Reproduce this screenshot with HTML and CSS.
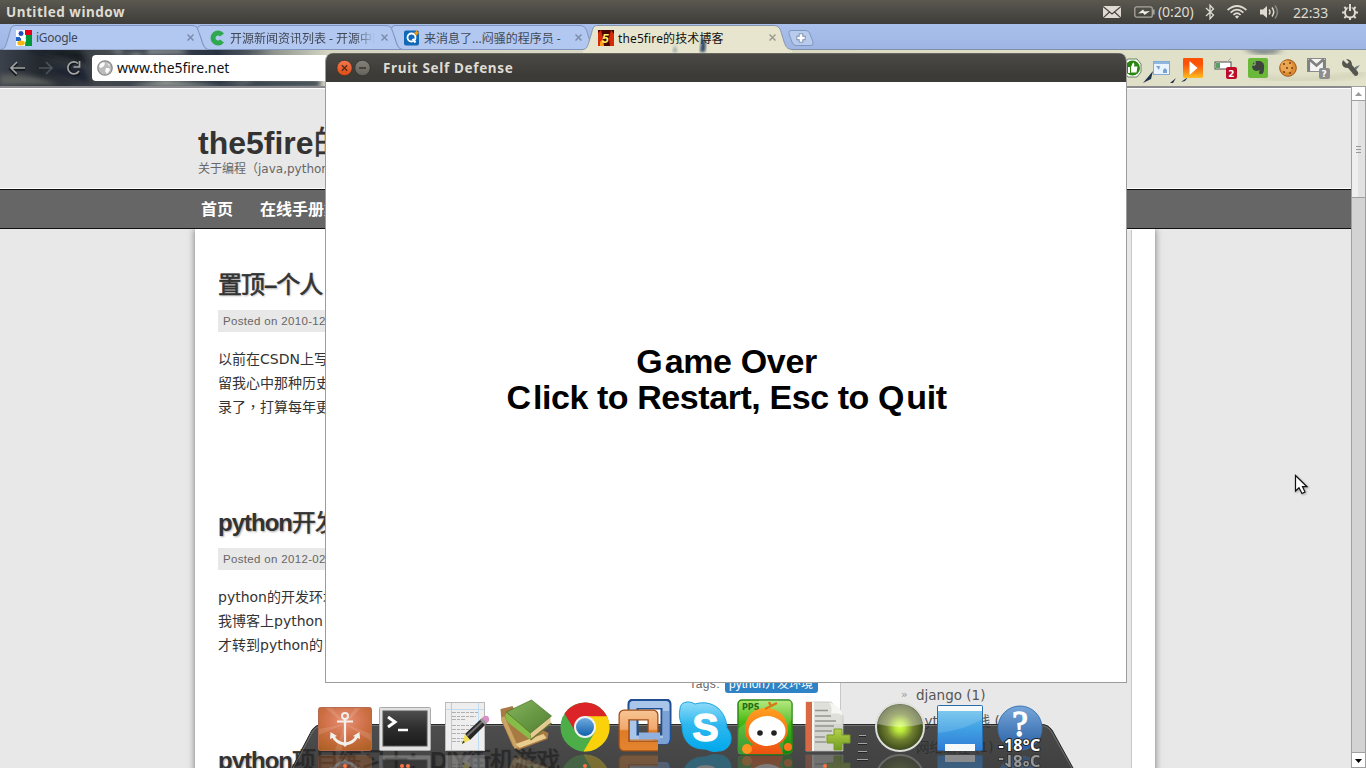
FILE: index.html
```html
<!DOCTYPE html>
<html lang="zh-CN">
<head>
<meta charset="utf-8">
<title>Desktop</title>
<link rel="stylesheet" href="styles.css">
</head>
<body>
<div class="desktop">
  <header class="panel">
    <span class="panel-title">Untitled window</span>
    <div class="indicators">
      <svg class="ind-mail" width="18" height="12" viewBox="0 0 18 12"><rect width="18" height="12" fill="#dfdbd2"/><path d="M0 0.5 L9 8 L18 0.5 M0 12 L6.5 6 M18 12 L11.500 6" fill="none" stroke="#45443f" stroke-width="1.200"/></svg>
      <svg class="ind-bat" width="21" height="12" viewBox="0 0 21 12"><rect x=".8" y=".8" width="17.500" height="10.400" rx="2" fill="none" stroke="#aaa79f" stroke-width="1.300"/><rect x="19" y="3.500" width="1.600" height="5" fill="#aaa79f"/><path d="M4 7.500 L9 3.500 L10.500 5.500 L16 5 L10.500 9 L9 7Z" fill="#f0ece3"/></svg>
      <span class="ind-time">(0:20)</span>
      <svg class="ind-bt" width="10" height="16" viewBox="0 0 10 16"><path d="M1 4 L8.500 11 L5 14.800 V1.200 L8.500 5 L1 12" fill="none" stroke="#dfdbd2" stroke-width="1.300"/></svg>
      <svg class="ind-wifi" width="20" height="14" viewBox="0 0 20 14"><g fill="none" stroke="#dfdbd2" stroke-width="1.700"><path d="M.6 5 Q10-3 19.400 5"/><path d="M3.600 7.600 Q10 1.500 16.400 7.600"/><path d="M6.400 10 Q10 6.200 13.600 10"/></g><path d="M8 11.500 Q10 9.500 12 11.500 L10 13.800Z" fill="#dfdbd2"/></svg>
      <svg class="ind-vol" width="20" height="14" viewBox="0 0 20 14"><path d="M0 4.500 H3 L7 1 V13 L3 9.500 H0Z" fill="#dfdbd2"/><g fill="none" stroke-width="1.500"><path d="M9 4.500 Q11 7 9 9.500 M12 2.500 Q15.500 7 12 11.500" stroke="#dfdbd2"/><path d="M15 .5 Q20 7 15 13.500" stroke="#89877f"/></g></svg>
      <span class="ind-clock">22:33</span>
      <svg class="ind-gear" width="16" height="16" viewBox="0 0 16 16"><circle cx="8" cy="8.500" r="5" fill="none" stroke="#dfdbd2" stroke-width="2"/><path d="M8 0 V7 M0 8.500 H3 M13 8.500 H16 M2.300 3 L4.500 5 M13.700 3 L11.500 5 M2.300 14 L4.500 12 M13.700 14 L11.500 12 M8 13 V16" stroke="#dfdbd2" stroke-width="2"/><path d="M6.200 0 V6 M9.800 0 V6" stroke="#45443f" stroke-width="1"/></svg>
    </div>
  </header>

  <nav class="tabs">
    <div class="tab">
      <svg class="tab-shape" width="210" height="26" viewBox="0 0 210 26"><path d="M0 25.500 C5 25 5 20 8 11 C10 4 10 1.500 15 1.500 H190 C196 1.500 197 4 199 11 C202 20 202 25 209 25.500" fill="#b2c8f1" stroke="#7d94bf"/></svg>
      <svg class="fav" width="16" height="16" viewBox="0 0 16 16"><rect width="16" height="16" fill="#fff"/><path d="M9 0H16V5H9Z" fill="#e8001b"/><path d="M10 5H16V16H9Z" fill="#009939"/><path d="M0 7H5V11H0Z" fill="#1d62c4"/><circle cx="5" cy="3.500" r="3" fill="#1c4fb8" stroke="#fff"/><path d="M4 7 Q11 8 8 12" stroke="#fff" stroke-width="2" fill="none"/><ellipse cx="5" cy="13" rx="3.800" ry="2.500" fill="#f8b711"/></svg>
      <span class="tab-text t1">iGoogle</span>
      <svg class="tab-x" width="7" height="7" viewBox="0 0 7 7"><path d="M.5 .5 L6.500 6.500 M6.500 .5 L.5 6.500" stroke="#7c8cab" stroke-width="1.500"/></svg>
    </div>
    <div class="tab">
      <svg class="tab-shape" width="210" height="26" viewBox="0 0 210 26"><path d="M5 1.500 H190 C196 1.500 197 4 199 11 C202 20 202 25 209 25.500 H14 C9 25 8 20 6 14 C4 8 2 5 3 3Z" fill="#b2c8f1" stroke="#7d94bf"/></svg>
      <svg class="fav" width="16" height="16" viewBox="0 0 16 16"><path d="M12 5 A5 5 0 1 0 12 11" fill="none" stroke="#2fa84f" stroke-width="5"/><path d="M8 8 H11" stroke="#b2c8f1" stroke-width="2"/></svg>
      <span class="tab-text t2 fade">开源新闻资讯列表 - 开源中国</span>
      <svg class="tab-x" width="7" height="7" viewBox="0 0 7 7"><path d="M.5 .5 L6.500 6.500 M6.500 .5 L.5 6.500" stroke="#7c8cab" stroke-width="1.500"/></svg>
    </div>
    <div class="tab">
      <svg class="tab-shape" width="210" height="26" viewBox="0 0 210 26"><path d="M5 1.500 H190 C196 1.500 197 4 199 11 C202 20 202 25 209 25.500 H14 C9 25 8 20 6 14 C4 8 2 5 3 3Z" fill="#b2c8f1" stroke="#7d94bf"/></svg>
      <svg class="fav" width="16" height="16" viewBox="0 0 16 16"><rect width="15" height="15" y=".5" rx="2" fill="#1169b6"/><circle cx="7.500" cy="7.500" r="4" fill="none" stroke="#fff" stroke-width="1.800"/><path d="M8.500 9 L11.500 12.500" stroke="#fff" stroke-width="2"/><path d="M12.500 0 L13.500 2 L15.500 3 L13.500 4 L12.500 6 L11.500 4 L9.500 3 L11.500 2Z" fill="#f39a1c"/></svg>
      <span class="tab-text t3">来消息了...闷骚的程序员 -</span>
      <svg class="tab-x" width="7" height="7" viewBox="0 0 7 7"><path d="M.5 .5 L6.500 6.500 M6.500 .5 L.5 6.500" stroke="#7c8cab" stroke-width="1.500"/></svg>
    </div>
    <div class="tab active">
      <svg class="tab-shape" width="210" height="29" viewBox="0 0 210 29"><defs><filter id="soft"><feGaussianBlur stdDeviation="1.500"/></filter></defs><path d="M0 25.500 C5 25 5 20 8 11 C10 4 10 1.500 15 1.500 H190 C196 1.500 197 4 199 11 C202 20 202 25 209 25.500 V29 H0Z" fill="#e7e5ce"/><path d="M0 25.500 C5 25 5 20 8 11 C10 4 10 1.500 15 1.500 H190 C196 1.500 197 4 199 11 C202 20 202 25 209 25.500" fill="none" stroke="#8795ab"/><path d="M119 13 Q124 15 122 28 H117Z" fill="#273f62" filter="url(#soft)"/><path d="M92 21 L94 28 H90Z" fill="#8196a0" filter="url(#soft)"/></svg>
      <svg class="fav" width="16" height="16" viewBox="0 0 16 16"><rect width="16" height="16" fill="#480500"/><path d="M0 3 L3 0 L5 8 L2 16 H0Z M12 16 L11 8 L13 0 L16 4 V16Z" fill="#d42b08"/><path d="M2 12 L5 9 L6 16 H2Z" fill="#ff9f18"/><text x="4" y="12.500" class="fav-five">5</text></svg>
      <span class="tab-text t4">the5fire的技术博客</span>
      <svg class="tab-x" width="7" height="7" viewBox="0 0 7 7"><path d="M.5 .5 L6.500 6.500 M6.500 .5 L.5 6.500" stroke="#9b9b92" stroke-width="1.500"/></svg>
    </div>
    <svg class="newtab" width="28" height="18" viewBox="0 0 28 18"><path d="M4 1.500 H19 Q22 1.500 23 5 L26 13 Q27 16.500 24 16.500 H9 Q6 16.500 5 13 L2 5 Q1 1.500 4 1.500Z" fill="#b9cbed" stroke="#8097c2"/><path d="M14 4.500 V13.500 M9.500 9 H18.500" stroke="#7488ae" stroke-width="4.500"/><path d="M14 5.300 V12.700 M10.300 9 H17.700" stroke="#fff" stroke-width="2.700"/></svg>
  </nav>

  <div class="toolbar">
    <svg class="toolbar-art" width="1366" height="37" viewBox="0 0 1366 37">
      <defs>
        <linearGradient id="sky"><stop offset="0" stop-color="#3b424c"/><stop offset=".03" stop-color="#23282f"/><stop offset=".075" stop-color="#42474c"/><stop offset=".11" stop-color="#3a424d"/><stop offset=".16" stop-color="#293341"/><stop offset=".2" stop-color="#8d938d"/><stop offset=".24" stop-color="#d5d5c2"/><stop offset="1" stop-color="#e3e2ca"/></linearGradient>
        <filter id="cloud"><feGaussianBlur stdDeviation="2.500"/></filter>
      </defs>
      <rect width="1366" height="37" fill="url(#sky)"/>
      <g filter="url(#cloud)"><path d="M108 0 L122 0 L118 4 L190 3 L180 0 H150 L138 7Z" fill="#b2b9b5"/><path d="M0 25 Q30 22 60 35 H0Z" fill="#5c615d"/><path d="M28 0 H80 L88 14 L55 5Z" fill="#161a20"/><path d="M130 36 L165 30 L230 37Z" fill="#9ba29a"/><path d="M215 0 L240 4 L270 1Z" fill="#303946"/><path d="M240 37 L255 30 H320 V37Z" fill="#333d49"/><path d="M40 20 L83 17 L90 33Z" fill="#1d2430"/></g>
      <path d="M1242 -2 Q1265 10 1284 -1Z" fill="#65727a" filter="url(#cloud)"/>
      <g fill="#1d304c"><path d="M1153 21 L1151 29 L1143 33Z"/><path d="M1176 28 L1173 33 L1170 33Z"/><path d="M1188 27 L1185 31 L1181 32Z"/><path d="M1360 15 L1352 25 L1355 17Z" opacity=".6"/></g>
      <path d="M1250 24 Q1290 37 1366 23" fill="none" stroke="#ced0b6" stroke-width="4" filter="url(#cloud)"/>
    </svg>
    <svg class="navbtns" width="84" height="22" viewBox="0 0 84 22"><g fill="none" stroke="#15181c" stroke-width="3.500"><path d="M17 6 L11 12 L17 18 M11 12 H25 M79 7 A6 6 0 1 0 79 16"/></g><g fill="none" stroke-width="1.700"><path d="M17 5 L11 11 L17 17 M11 11 H25" stroke="#a3a5a4"/><path d="M46 5 L52 11 L46 17 M52 11 H39" stroke="#4d535a"/><path d="M78 6.500 A6 6 0 1 0 79 14" stroke="#a3a5a4"/><path d="M79.500 4 V10 H73.500" stroke="#a3a5a4"/></g></svg>
    <div class="omnibox">
      <svg width="16" height="16" viewBox="0 0 16 16"><circle cx="8" cy="8" r="7.200" fill="#bcbcbc" stroke="#8b8b8b" stroke-width="1.300"/><path d="M3 4 Q6 1 8 3 L7 6 L4 8 L2 7Z M9 8 L12 8 L13 10 L10 14 L8 11Z M10 3 L13 5 L12 6Z" fill="#fafafa"/></svg>
      <span>www.the5fire.net</span>
    </div>
    <div class="extensions">
      <svg width="19" height="20" viewBox="0 0 19 20"><path d="M5 1 H14 L18 6 V14 L14 19 H5 L1 14 V6Z" fill="#fff" stroke="#63845b"/><circle cx="9.500" cy="10" r="7.500" fill="#29870f"/><path d="M5 9 H7 V15 H5Z M8 9 L10 4.500 Q12 5 11 8.500 H14.500 L13.500 14.500 H8Z" fill="#fff"/></svg>
      <svg width="17" height="14" viewBox="0 0 17 14"><rect x=".5" y=".5" width="16" height="13" fill="#eaf4ff" stroke="#84acd8"/><path d="M1 2 H16" stroke="#91b6df" stroke-width="2"/><path d="M3 5 H7 L6 9Z M10 9 L12 7 L14 9 V12 H10Z" fill="#78a1d4"/></svg>
      <svg class="ext-play" width="20" height="20" viewBox="0 0 20 20"><defs><linearGradient id="play" x2="0" y2="1"><stop offset=".3" stop-color="#fb5208"/><stop offset=".7" stop-color="#f98a17"/><stop offset="1" stop-color="#ffc020"/></linearGradient></defs><rect width="20" height="20" rx="1" fill="url(#play)"/><path d="M6.500 3 L14.500 10 L6.500 17Z" fill="#fff"/></svg>
      <svg width="23" height="23" viewBox="0 0 23 23"><rect x="1" y="6" width="16" height="7" fill="#fff" stroke="#4b4b4b"/><path d="M2 7 H6 V12 H2Z" fill="#5a9f61"/><path d="M13 6 L17 2" stroke="#aaa"/><rect x="12" y="11" width="11" height="12" rx="2" fill="#bd0c26"/><text x="14.300" y="20.500" class="badge-num">2</text></svg>
      <svg width="20" height="20" viewBox="0 0 20 20"><rect width="20" height="20" rx="2" fill="#69b839"/><path d="M4 7 L7 3 L12 3 Q17 4 16 11 Q16 17 12 16 Q10 15 12 12 L9 13 Q4 13 4 7Z" fill="#3d443d"/><path d="M7 3 V7 H4" stroke="#9dd17c" fill="none"/></svg>
      <svg width="18" height="18" viewBox="0 0 18 18"><circle cx="9" cy="9" r="8.300" fill="#dd8b31" stroke="#9f5619"/><circle cx="7.500" cy="7.500" r="6" fill="#eba652"/><g fill="#733d16"><circle cx="5" cy="5" r="1"/><circle cx="11" cy="4" r="1"/><circle cx="8" cy="9" r="1"/><circle cx="13" cy="9" r="1"/><circle cx="5" cy="13" r="1"/><circle cx="11" cy="14" r="1"/></g></svg>
      <svg width="23" height="23" viewBox="0 0 23 23"><rect x="0.500" y="2.500" width="18" height="13" fill="#f4f4f4" stroke="#8a8a8a"/><path d="M1.800 15.500 V4 M17.200 15.500 V4 M2 3 L9.500 9.500 L17 3" fill="none" stroke="#808080" stroke-width="2.600"/><rect x="12" y="12" width="11" height="11" rx="2" fill="#8d8d8d"/><text x="14.500" y="21" class="badge-num">?</text></svg>
      <svg width="18" height="18" viewBox="0 0 18 18"><path d="M2 1 L6 5 L8 3 L5 0 Q11 0 11 6 L17 13 Q18 17 14 17 L7 9 Q1 9 1 4Z" fill="#555550"/></svg>
    </div>
  </div>

  <main class="viewport">
    <div class="page">
      <div class="site-head"><h1>the5fire<span class="han">的</span></h1><p>关于编程（java,python</p></div>
      <div class="site-nav"><span>首页</span><span>在线手册集</span></div>
      <div class="content">
        <div class="posts">
          <article class="post"><h2><span class="han">置顶</span>–<span class="han">个人</span></h2><div class="meta">Posted on 2010-12</div><p>以前在CSDN上写<br>留我心中那种历史<br>录了<span class="comma" lang="zh-TW">，</span>打算每年更</p></article>
          <article class="post"><h2>python<span class="han">开发</span></h2><div class="meta">Posted on 2012-02</div><p>python的开发环境<br>我博客上python<br>才转到python的</p><div class="tags"><span>Tags:</span><b>python开发环境</b></div></article>
          <article class="post"><h2>python<span class="han">项目练习十：</span>DIY<span class="han">街机游戏</span></h2></article>
        </div>
        <aside class="sidebar"><ul><li><i>»</i>django (1)</li><li><i>»</i>python在线 (1)</li><li><i>»</i>网络编程 (1)</li></ul></aside>
      </div>
    </div>
    <div class="scrollbar">
      <svg class="sb-btn" width="13" height="13" viewBox="0 0 13 13"><path d="M3 9 L6.500 5 L10 9Z" fill="#999"/></svg>
      <div class="thumb"><i></i><i></i><i></i></div>
      <div class="track"></div>
      <svg class="sb-btn" width="13" height="14" viewBox="0 0 13 14"><path d="M3 6 L6.500 10 L10 6Z" fill="#000"/></svg>
    </div>
  </main>

  <section class="window">
    <div class="titlebar">
      <svg width="36" height="18" viewBox="0 0 36 18"><defs><linearGradient id="cl" x2="0" y2="1"><stop stop-color="#f4794f"/><stop offset="1" stop-color="#de4a12"/></linearGradient><linearGradient id="mn" x2="0" y2="1"><stop stop-color="#83817a"/><stop offset="1" stop-color="#65635c"/></linearGradient></defs><circle cx="8.500" cy="9" r="7.700" fill="url(#cl)" stroke="#2f2e2a" stroke-width=".7"/><path d="M5.800 6.300 L11.200 11.700 M11.200 6.300 L5.800 11.700" stroke="#542a19" stroke-width="1.300"/><circle cx="26.500" cy="9" r="7.700" fill="url(#mn)" stroke="#2f2e2a" stroke-width=".7"/><path d="M23 9 H30" stroke="#36352f" stroke-width="1.300"/></svg>
      <span>Fruit Self Defense</span>
    </div>
    <div class="game">
      <div class="line l1"><i>G</i>ame Over</div>
      <div class="line l2"><i>C</i>lick to Restart, Esc to <i>Q</i>uit</div>
    </div>
  </section>

  <footer class="dock">
    <svg class="dock-base" width="784" height="46" viewBox="0 0 784 46"><defs><linearGradient id="db" x2="0" y2="1"><stop stop-color="#303030"/><stop offset="1" stop-color="#252525"/></linearGradient></defs><path d="M1 46 L21 8 Q25 2 32 2 H750 Q757 2 761 8 L782 46Z" fill="url(#db)" fill-opacity=".86"/><path d="M2 46 L22 9 Q26 3.500 33 3.500 H749 Q756 3.500 760 9 L781 46" fill="none" stroke="#999" stroke-opacity=".5"/><path d="M1 46 L21 8 Q25 2.500 32 2.500 H750 Q757 2.500 761 8 L782 46" fill="none" stroke="#292929"/></svg>
    <svg class="app" viewBox="0 0 60 69"><defs><radialGradient id="an" cx=".5" cy=".3" r=".8"><stop stop-color="#e79175"/><stop offset=".5" stop-color="#cf7047"/><stop offset="1" stop-color="#ad6023"/></radialGradient></defs>
      <g id="a1"><rect x="3.500" y="8.500" width="53" height="43" rx="2" fill="url(#an)" stroke="#b66b50"/><path d="M30 25 L10 9 H17Z M30 25 L40 9 H46Z M30 25 L4 30 V36Z M30 25 L56 35 V42Z M30 25 L20 51 H27Z" fill="#fff" opacity=".12"/><g fill="none" stroke="#f2f0ed"><circle cx="30" cy="17" r="3" stroke-width="2"/><path d="M30 20 V45 M22 22.500 H38" stroke-width="2.200"/><path d="M18 37 Q21 44 30 45 Q39 44 42 37" stroke-width="3"/></g><path d="M15 40 L15.500 33 L22 37Z M45 40 L44.500 33 L38 37Z M26 44 H34 L30 48Z" fill="#f2f0ed"/></g>
      <use href="#a1" transform="translate(0 108) scale(1 -1)" opacity=".35"/><circle cx="30" cy="67" r="2" fill="#ff7145"/></svg>
    <svg class="app" viewBox="0 0 60 69"><defs><linearGradient id="tm" x2="0" y2="1"><stop stop-color="#4d4d4d"/><stop offset=".5" stop-color="#2d2d2d"/><stop offset="1" stop-color="#1b1b1b"/></linearGradient></defs>
      <g id="a2"><rect x="4.500" y="8.500" width="51" height="43" rx="1" fill="#e1e1e1" stroke="#aaa"/><rect x="8" y="12" width="44" height="35" fill="url(#tm)" stroke="#555"/><path d="M13 18 L20 23 L13 28" fill="none" stroke="#fff" stroke-width="3"/><path d="M23 31 H33" stroke="#fff" stroke-width="2.500"/></g>
      <use href="#a2" transform="translate(0 108) scale(1 -1)" opacity=".3"/><circle cx="27" cy="67" r="2" fill="#ff7145"/><circle cx="33" cy="67" r="2" fill="#ff7145"/></svg>
    <svg class="app" viewBox="0 0 60 69">
      <g id="a3"><rect x="10.500" y="3.500" width="39" height="48" fill="#eeeeef" stroke="#bbb"/><path d="M16.500 4 V51" stroke="#efb5b5"/><path d="M43.500 4 V51 M11 10.500 H49" stroke="#bedbf1"/><path d="M17 13.500 H43 M17 17.500 H41 M17 20.500 H30 M17 26.500 H40 M17 30.500 H38 M17 34.500 H32 M17 39.500 H29 M17 42.500 H27" stroke="#b0b0b0" stroke-dasharray="4 1 3 1"/><path d="M30 35 L46 20 L51 25 L35 41Z" fill="#272727"/><path d="M32 37 L48 22" stroke="#707070" stroke-width="2"/><path d="M30 35 L27 45 L35 41Z" fill="#f0df57"/><path d="M27 45 L28 42 L30 43Z" fill="#222"/><path d="M46 20 L49 17 Q55 16 54 22 L51 25Z" fill="#d890c6"/><path d="M45 21 L50 26 L52 24 L47 19Z" fill="#999"/></g>
      <use href="#a3" transform="translate(0 108) scale(1 -1)" opacity=".3"/></svg>
    <svg class="app" viewBox="-4.500 0 60 69"><defs><linearGradient id="bk" x2="1" y2="1"><stop stop-color="#86b45b"/><stop offset="1" stop-color="#4f7f31"/></linearGradient></defs>
      <g id="a4"><path d="M1 10 L13 7 L20 20 L49 34 L48 40 L19 51 L13 47 L2 22Z" fill="#a77943"/><path d="M3 18 L17 49" stroke="#c9a464" stroke-width="4"/><path d="M16 45 L44 35 L47 39 L20 49Z" fill="#e8cc8d"/><path d="M7 14 L31 31 V41 L8 23 Q4 17 7 14Z" fill="#86bd48"/><path d="M31 34 L51 17 V24 L32 41Z" fill="#e2ca92"/><path d="M7 13 L32 1 L52 17 L31 34Z" fill="url(#bk)" stroke="#477227" stroke-width=".7"/><path d="M31 41 L52 24" stroke="#66732c" stroke-width="1.500"/></g>
      <use href="#a4" transform="translate(0 108) scale(1 -1)" opacity=".3"/></svg>
    <svg class="app" viewBox="0 0 60 69"><defs><linearGradient id="cb" x2="0" y2="1"><stop stop-color="#6eabe0"/><stop offset="1" stop-color="#1260ab"/></linearGradient></defs>
      <g id="a5"><circle cx="30" cy="28" r="24.500" fill="#4bae48"/><path d="M30 17 H52 A24.500 24.500 0 0 1 28.500 52.450 L40 33Z" fill="#fbd10b"/><path d="M9.500 14.600 A24.500 24.500 0 0 1 52 17.300 H30 L20 32Z" fill="#dc2428"/><circle cx="30" cy="28" r="11" fill="#f1f1ef"/><circle cx="30" cy="28" r="9" fill="url(#cb)"/></g>
      <use href="#a5" transform="translate(0 108) scale(1 -1)" opacity=".3"/><circle cx="30" cy="67" r="2" fill="#ff7145"/></svg>
    <svg class="app" viewBox="0 0 60 69"><defs><linearGradient id="or" gradientUnits="userSpaceOnUse" x1="0" y1="10" x2="0" y2="52"><stop stop-color="#f8c797"/><stop offset=".48" stop-color="#f0a76c"/><stop offset=".52" stop-color="#e07a26"/><stop offset="1" stop-color="#e3852f"/></linearGradient></defs>
      <g id="a6" fill="none" stroke-linejoin="round"><rect x="18" y="5" width="33" height="35" stroke="#1f4e92" stroke-width="11"/><rect x="18" y="5.500" width="33" height="34.500" stroke="#a9c6ea" stroke-width="7"/><path d="M38 42 H51 V12" stroke="#7ba1d5" stroke-width="6"/><path d="M43 47 H9 V16 H38 V38" stroke="#9f4f16" stroke-width="11"/><path d="M38 37.500 V16 H9 V47 H43" stroke="url(#or)" stroke-width="8.500"/><path d="M24 37 H45" stroke="#8fb1df" stroke-width="7"/><path d="M15 41 H42" stroke="#e07a26" stroke-width="1"/></g>
      <use href="#a6" transform="translate(0 108) scale(1 -1)" opacity=".3"/></svg>
    <svg class="app" viewBox="0 0 60 69"><defs><linearGradient id="sk" x2="0" y2="1"><stop stop-color="#90dcfa"/><stop offset=".45" stop-color="#30b8ef"/><stop offset="1" stop-color="#00a8ec"/></linearGradient></defs>
      <g id="a7"><path d="M5 10 C5 3 13 1 20 5 C37 0 51 11 52 29 C61 39 54 53 43 52 C37 54 33 50 29 50 C15 50 7 41 7 26 C4 20 4 15 5 10Z" fill="url(#sk)" stroke="#16a4df"/><text x="30.500" y="41.500" class="skype-s">S</text></g>
      <use href="#a7" transform="translate(0 108) scale(1 -1)" opacity=".3"/></svg>
    <svg class="app" viewBox="0 0 60 69"><defs><linearGradient id="pg" x2="0" y2="1"><stop stop-color="#a9e66a"/><stop offset=".4" stop-color="#4ab915"/><stop offset="1" stop-color="#108414"/></linearGradient><linearGradient id="po" x2="0" y2="1"><stop stop-color="#ffa021"/><stop offset="1" stop-color="#ed5110"/></linearGradient></defs>
      <g id="a8"><rect x="3" y="1" width="54" height="54" rx="4" fill="url(#pg)" stroke="#278914" stroke-width="1.500"/><path d="M3 30 Q20 18 24 1 H57 V20 Q48 30 48 55 H3Z" fill="#fff" opacity=".15"/><text x="7" y="11" class="pps">PPS</text><path d="M30 9 Q50 9 53 30 Q53 41 44 45 L48 55 H12 L18 45 Q9 40 10 29 Q12 10 30 9Z" fill="url(#po)"/><path d="M30 10 L36 7 L34 3 M36 7 L42 4" fill="none" stroke="#d97711" stroke-width="2.500"/><ellipse cx="32" cy="32" rx="18.500" ry="15" fill="#fff"/><circle cx="25" cy="34" r="2.800" fill="#222"/><circle cx="39" cy="34" r="2.800" fill="#222"/><circle cx="12" cy="50" r="5" fill="#ff9420"/><circle cx="53" cy="48" r="4" fill="#ff761b"/></g>
      <use href="#a8" transform="translate(0 112) scale(1 -1)" opacity=".3"/></svg>
    <svg class="app" viewBox="0 0 60 69"><defs><linearGradient id="gp" x2="0" y2="1"><stop stop-color="#b4d24a"/><stop offset="1" stop-color="#719b1f"/></linearGradient></defs>
      <g id="a9"><path d="M11 3 H36 L48 16 V52 H11Z" fill="#deded9" fill-opacity=".94" stroke="#bbb" stroke-width=".7"/><path d="M11 3 H17 V52 H11Z" fill="#d86945"/><path d="M18 3 V52" stroke="#f8f8f2" stroke-width="2"/><path d="M34 3 Q38 9 36 15 Q44 13 48 17 Q46 7 34 3Z" fill="#f6f6f2"/><path d="M20 11.500 H33 M20 17 H36 M20 22 H41 M20 27 H39 M20 32 H37 M20 38 H30 M20 43 H31" stroke="#959590" stroke-width="1.500"/><path d="M39 30 H47 V36 H55 V44 H47 V51 H39 V44 H32 V36 H39Z" fill="url(#gp)" stroke="#789b2a"/></g>
      <use href="#a9" transform="translate(0 108) scale(1 -1)" opacity=".3"/><circle cx="30" cy="67" r="2" fill="#ff7145"/></svg>
    <svg class="sep" viewBox="0 0 15 69"><path d="M4 36.500 H11 M3 44.500 H12 M3 52.500 H12 M2 60.500 H13" stroke="#a4a4a4"/><path d="M4 37.500 H11 M3 45.500 H12 M3 53.500 H12 M2 61.500 H13" stroke="#252525"/></svg>
    <svg class="app" viewBox="0 0 60 69"><defs><radialGradient id="ob"><stop stop-color="#d4ff45"/><stop offset=".2" stop-color="#b9e83b"/><stop offset=".55" stop-color="#718130"/><stop offset="1" stop-color="#38451b"/></radialGradient></defs>
      <g id="a10"><circle cx="30" cy="28" r="24" fill="url(#ob)" stroke="#dededb" stroke-width="2"/><path d="M7.500 25 A22.700 22.700 0 0 1 52.500 25 Q30 31 7.500 25Z" fill="#fff" opacity=".35"/></g>
      <use href="#a10" transform="translate(0 108) scale(1 -1)" opacity=".25"/></svg>
    <svg class="app" viewBox="0 0 60 69"><defs><linearGradient id="fd" x2="0" y2="1"><stop stop-color="#73c7ed"/><stop offset=".5" stop-color="#40a2e4"/><stop offset="1" stop-color="#307bd5"/></linearGradient></defs>
      <g id="a11"><rect x="7.500" y="6.500" width="45" height="45" rx="1" fill="url(#fd)" stroke="#276dad"/><path d="M8 7 H52 V12 H8Z M15 45 H45 V52 H15Z" fill="#f6f9fa"/><path d="M8 34 Q35 31 52 20 V12 H8Z" fill="#fff" opacity=".14"/></g>
      <use href="#a11" transform="translate(0 108) scale(1 -1)" opacity=".4"/></svg>
    <svg class="app" viewBox="0 0 60 69"><defs><linearGradient id="qp" x2="0" y2="1"><stop stop-color="#77a6d9"/><stop offset="1" stop-color="#265fa4"/></linearGradient></defs>
      <g id="a12"><circle cx="30" cy="29" r="22" fill="url(#qp)" stroke="#3976b3"/><text x="30" y="37" class="question">?</text><text x="8.500" y="52" class="temp">-18°C</text></g>
      <use href="#a12" transform="translate(0 108) scale(1 -1)" opacity=".45"/></svg>
  </footer>

  <svg class="cursor" width="16" height="22" viewBox="0 0 16 22"><path d="M1.500 1.500 V17 L5 13.700 L8 19.500 L11 18 L8.500 12.700 H13Z" fill="#fff" stroke="#111" stroke-width="1.200"/></svg>
</div>
</body>
</html>
```

FILE: styles.css
```css
* { box-sizing: border-box; }
body { margin: 0; overflow: hidden; }
svg { display: block; flex: none; }
i { font-style: normal; }

.desktop {
  position: relative;
  display: flex;
  flex-direction: column;
  width: 1366px;
  height: 768px;
  overflow: hidden;
  background: #e8e8e8;
  font-family: "Noto Sans", "Noto Sans CJK SC", sans-serif;
  white-space: nowrap;
}

/* top panel */
.panel {
  display: flex;
  flex: none;
  align-items: center;
  justify-content: space-between;
  height: 24px;
  padding: 0 8px 0 6px;
  background: linear-gradient(#5b594f, #4b4a44 50%, #3e3d39);
  color: #dfdbd2;
}
.panel-title { font-size: 13.500px; font-weight: 700; letter-spacing: .5px; }
.indicators { display: flex; align-items: center; font-size: 14px; }
.ind-bat { margin-left: 13px; }
.ind-time { width: 38px; margin-left: 3px; letter-spacing: -.1px; line-height: 20px; }
.ind-bt { margin-left: 9px; }
.ind-wifi { margin-left: 12px; }
.ind-vol { margin-left: 13px; }
.ind-clock { width: 37px; margin-left: 13px; letter-spacing: -.15px; }
.ind-gear { margin-left: 12px; }

/* browser tabs */
.tabs {
  display: flex;
  flex: none;
  height: 26px;
  padding-left: 8px;
  background: linear-gradient(#a9bfec, #9fb5e3);
  border-bottom: 1px solid #8090a9;
}
.tab {
  position: relative;
  display: flex;
  flex: none;
  align-items: center;
  width: 194px;
  height: 26px;
  padding: 1px 8px 0 8px;
}
.tab-shape { position: absolute; left: -7px; top: 0; }
.tab.active { z-index: 2; }
.fav, .tab-text, .tab-x { position: relative; }
.tab-text { width: 147px; margin-left: 4px; overflow: hidden; font-size: 12px; color: #414855; }
.t1 { letter-spacing: -.3px; }
.t4 { color: #111; letter-spacing: .12px; }
.fade { -webkit-mask-image: linear-gradient(90deg, #000 125px, transparent 145px); mask-image: linear-gradient(90deg, #000 125px, transparent 145px); }
.tab-x { margin-left: 4px; }
.fav-five { font: italic 900 12px "Liberation Sans", sans-serif; fill: #fff26c; }
.newtab { margin: 5px 0 0 3px; }

/* browser toolbar */
.toolbar {
  position: relative;
  display: flex;
  flex: none;
  align-items: center;
  height: 36px;
  padding-right: 7px;
  border-bottom: 1px solid #a9b4bd;
}
.toolbar-art { position: absolute; left: 0; top: 0; }
.navbtns, .omnibox, .extensions { position: relative; }
.omnibox {
  display: flex;
  align-items: center;
  gap: 4px;
  width: 1020px;
  height: 26px;
  margin-left: 8px;
  padding-left: 5px;
  border-radius: 4px;
  background: #fff;
  font-size: 14px;
  color: #111;
  letter-spacing: -.04px;
}
.extensions { display: flex; flex: 1; align-items: center; justify-content: space-between; margin-left: 11px; }
.ext-play { margin-left: 3px; }
.badge-num { font: 700 9px "DejaVu Sans", sans-serif; fill: #fff; }

/* web page */
.viewport { position: relative; z-index: 0; display: flex; flex: 1; min-height: 0; border-top: 2px solid #8b8b8f; }
.page { display: flex; flex: 1; flex-direction: column; height: 680px; overflow: hidden; border-top: 1px solid #fff; background: #e8e8e8; font-family: "DejaVu Sans", "Noto Sans CJK SC", sans-serif; }
.site-head { flex: none; height: 100px; padding: 35px 0 0 198px; border-bottom: 1px solid #fff; }
.site-head h1 { margin: 0; font: 700 32px/38px "Liberation Sans", "Noto Sans CJK SC", sans-serif; color: #333; }
.han { font-weight: 400; -webkit-text-stroke: .6px #333; }
.site-head p { margin: -2px 0 0; font-size: 12px; line-height: 18px; color: #666; }
.site-nav {
  position: relative;
  z-index: 1;
  display: flex;
  flex: none;
  align-items: center;
  gap: 27px;
  height: 40px;
  padding: 0 0 2px 201px;
  border: 1px solid #111;
  border-width: 1px 0;
  background: #666;
  color: #fff;
  font: 700 16px "Liberation Sans", "Noto Sans CJK SC", sans-serif;
}
.content {
  display: flex;
  flex: none;
  width: 960px;
  height: 560px;
  margin-left: 195px;
  padding: 0 23px;
  border-top: 1px solid #fff;
  background: #fff;
  box-shadow: 0 0 7px rgba(0, 0, 0, .5);
}
.posts { width: 622px; padding-top: 39px; }
.post { display: flex; flex-direction: column; height: 238px; color: #333; }
.post h2 { height: 30px; margin: 0 0 11px; font: 700 24px/32px "Liberation Sans", "Noto Sans CJK SC", sans-serif; letter-spacing: -1px; text-shadow: 1px 1px 2px #aaa; }
.meta { height: 22px; padding-left: 5px; background: #e8e8e8; font: 11.500px/22px "Liberation Sans", sans-serif; letter-spacing: .33px; color: #666; }
.post p { margin: 15px 0 0; font-size: 14px; line-height: 24px; }
.comma { font-family: "Noto Sans CJK TC", sans-serif; line-height: 1; }
.tags { display: flex; justify-content: flex-end; gap: 5px; margin-top: 18px; padding-right: 22px; font: 12px/18px "Liberation Sans", "Noto Sans CJK SC", sans-serif; color: #666; }
.tags span { letter-spacing: .4px; }
.tags b { width: 93px; padding: 0 4px; border-radius: 3px; background: #2d83c5; color: #fff; font-weight: 400; }
.sidebar { width: 292px; border: 1px solid #c8c8c8; border-width: 0 1px; background: #e8e8e8; color: #555; }
.sidebar ul { display: flex; flex-direction: column; margin: 0; padding: 452px 0 0 60px; list-style: none; font-size: 13.500px; line-height: 26px; }
.sidebar li { display: flex; height: 26px; }
.sidebar li i { width: 15px; color: #999; font-size: 11px; }

.scrollbar { display: flex; flex: none; flex-direction: column; width: 15px; height: 682px; margin-top: -2px; border: 1px solid #a0a0a0; background: #d3d3d3; }
.sb-btn { background: #fff; }
.thumb { display: flex; flex-direction: column; align-items: center; justify-content: center; gap: 2px; height: 98px; border: 1px solid #a0a0a0; border-width: 1px 0; background: linear-gradient(90deg, #efefef 50%, #e2e2e2 50%); }
.thumb i { width: 5px; height: 1px; background: #999; }
.track { flex: 1; border-bottom: 1px solid #a0a0a0; }

/* game window */
.window {
  position: absolute;
  left: 325px;
  top: 53px;
  z-index: 3;
  width: 802px;
  height: 630px;
  display: flex;
  flex-direction: column;
  border: 1px solid #9e9c98;
  border-top: 0;
  border-radius: 8px 8px 0 0;
  background: #fff;
  overflow: hidden;
}
.titlebar {
  display: flex;
  flex: none;
  align-items: center;
  gap: 11px;
  height: 29px;
  margin: 0 -1px;
  padding-left: 11px;
  border-top: 1px solid #686760;
  background: linear-gradient(#4a4945, #3c3b37 75%);
  color: #dfdbd2;
  font-size: 13.500px;
  font-weight: 700;
  letter-spacing: .65px;
}
.game { display: flex; flex: 1; flex-direction: column; align-items: center; padding: 261px 0 0 1px; font: 700 34px/36px "Liberation Sans", sans-serif; color: #000; }
.line { height: 36px; }
.line i { letter-spacing: 2px; }
.l1 { letter-spacing: -.35px; }
.l2 { letter-spacing: -.43px; }

/* dock */
.dock { position: absolute; left: 315px; top: 699px; z-index: 4; display: flex; width: 735px; height: 69px; }
.dock-base { position: absolute; left: -24px; top: 23px; }
.app { position: relative; width: 60px; height: 69px; }
.sep { position: relative; width: 15px; height: 69px; }
.skype-s { font: 700 39px "Liberation Sans", sans-serif; text-anchor: middle; fill: #fff; stroke: #fff; stroke-width: 1.500px; }
.pps { font: 700 8px "DejaVu Sans", sans-serif; fill: #236c15; }
.question { font: 400 35px "Liberation Serif", serif; text-anchor: middle; fill: #fff; stroke: #fff; stroke-width: 1.300px; }
.temp { font: 700 16px "Noto Sans", sans-serif; letter-spacing: .3px; fill: #fff; stroke: #222; stroke-width: 2px; paint-order: stroke; }

.cursor { position: absolute; left: 1294px; top: 474px; z-index: 5; filter: drop-shadow(1px 1px 1px rgba(0, 0, 0, .3)); }
```
